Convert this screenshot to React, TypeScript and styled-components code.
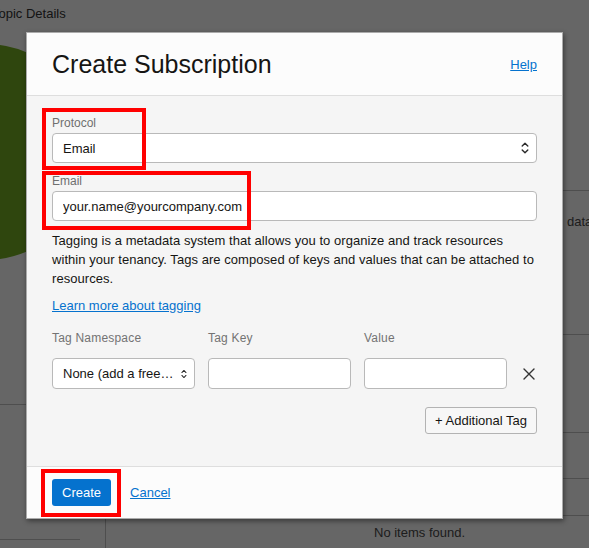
import React from "react";
import styled, { createGlobalStyle } from "styled-components";

const Global = createGlobalStyle`
  html, body { margin: 0; padding: 0; }
  body { font-family: "Liberation Sans", Arial, sans-serif; background: #fff; }
  * { box-sizing: border-box; }
`;

const Screen = styled.div`
  position: relative;
  width: 589px;
  height: 548px;
  overflow: hidden;
  background: #fff;
`;

/* ---------- page behind the dialog ---------- */
const Backdrop = styled.div`
  display: grid;
  grid-template-columns: 105px 1fr;
  height: 100%;
`;

const Side = styled.div`
  display: flex;
  flex-direction: column;
`;

const PageTitle = styled.div`
  margin: 6px 0 0 -8px;
  font-size: 13px;
  line-height: 15px;
  color: #333;
  white-space: nowrap;
`;

const Avatar = styled.div`
  flex-shrink: 0;
  width: 216px;
  height: 216px;
  margin: 23px 0 0 -123px;
  border-radius: 50%;
  background: #76b023;
`;

const Rule = styled.div<{ $top: number; $w: string }>`
  flex-shrink: 0;
  margin-top: ${(p) => p.$top}px;
  width: ${(p) => p.$w};
  height: 1px;
  background: #c4c4c4;
`;

const Main = styled.div`
  padding-top: 190px;
  display: flex;
  flex-direction: column;
`;

const Table = styled.div`
  flex: 1;
  border-left: 1px solid #c4c4c4;
  display: flex;
  flex-direction: column;
`;

const TRow = styled.div<{ $h?: number; $pl: number; $pt: number }>`
  flex: ${(p) => (p.$h ? "0 0 auto" : "1")};
  height: ${(p) => (p.$h ? `${p.$h}px` : "auto")};
  border-top: 1px solid #c4c4c4;
  padding: ${(p) => p.$pt}px 0 0 ${(p) => p.$pl}px;
  font-size: 13px;
  line-height: 16px;
  color: #4a4a4a;
  white-space: nowrap;
`;

const Overlay = styled.div`
  position: absolute;
  inset: 0;
  background: rgba(0, 0, 0, 0.6);
`;

/* ---------- dialog ---------- */
const Dialog = styled.div`
  position: absolute;
  left: 26px;
  top: 32px;
  width: 537px;
  border: 1px solid rgba(0, 0, 0, 0.3);
  box-shadow: 1px 2px 5px rgba(0, 0, 0, 0.45);
  background: #f5f5f5;
  display: flex;
  flex-direction: column;
`;

const Header = styled.div`
  height: 63px;
  padding: 0 25px;
  display: flex;
  align-items: center;
  justify-content: space-between;
  background: #fcfcfc;
  border-bottom: 1px solid #dedede;
`;

const Title = styled.h1`
  margin: 0;
  font-size: 25px;
  line-height: 30px;
  font-weight: 400;
  color: #161513;
`;

const Link = styled.a`
  font-size: 13px;
  line-height: 19px;
  color: #0572ce;
  text-decoration: underline;
  cursor: pointer;
`;

const Body = styled.div`
  padding: 19px 25px 32px;
  display: flex;
  flex-direction: column;
`;

const Field = styled.div<{ $gap?: number }>`
  display: flex;
  flex-direction: column;
  margin-top: ${(p) => p.$gap ?? 0}px;
`;

const Label = styled.label`
  font-size: 12px;
  line-height: 16px;
  color: #6f6f6f;
  margin-bottom: 2px;
`;

const SelectBox = styled.div<{ $h: number }>`
  height: ${(p) => p.$h}px;
  padding: 0 7px 0 10px;
  display: flex;
  align-items: center;
  justify-content: space-between;
  gap: 5px;
  background: #fff;
  border: 1px solid #b9b9b9;
  border-radius: 4px;
  font-size: 13px;
  color: #161513;
  min-width: 0;
`;

const SelectText = styled.span`
  overflow: hidden;
  white-space: nowrap;
  text-overflow: ellipsis;
  min-width: 0;
`;

const TextInput = styled.input<{ $h: number }>`
  height: ${(p) => p.$h}px;
  width: 100%;
  padding: 0 10px;
  background: #fff;
  border: 1px solid #b9b9b9;
  border-radius: 4px;
  font-family: inherit;
  font-size: 13px;
  color: #161513;
  outline: none;
`;

const Help = styled.p`
  margin: 10px 0 0;
  font-size: 13px;
  line-height: 19px;
  letter-spacing: 0.05px;
  color: #161513;
`;

const LearnLink = styled(Link)`
  display: block;
  align-self: flex-start;
  margin-top: 8px;
`;

const TagGrid = styled.div`
  margin-top: 15px;
  display: grid;
  grid-template-columns: 143px 143px 143px 1fr;
  column-gap: 13px;
  row-gap: 12px;
  align-items: center;
`;

const TagLabel = styled.span`
  font-size: 12px;
  line-height: 16px;
  letter-spacing: 0.2px;
  color: #737373;
`;

const RemoveButton = styled.button`
  justify-self: center;
  width: 14px;
  height: 14px;
  padding: 0;
  border: none;
  background: transparent;
  display: flex;
  align-items: center;
  justify-content: center;
  cursor: pointer;
`;

const SecondaryButton = styled.button`
  align-self: flex-end;
  margin-top: 18px;
  height: 27px;
  padding: 0 9px;
  border: 1px solid #b3b3b3;
  border-radius: 3px;
  background: #f7f7f7;
  font-family: inherit;
  font-size: 13px;
  color: #161513;
`;

const Footer = styled.div`
  padding: 12px 25px 12px;
  display: flex;
  align-items: center;
  gap: 19px;
  background: #fcfcfc;
  border-top: 1px solid #dedede;
`;

const PrimaryButton = styled.button`
  height: 27px;
  padding: 0 10px;
  border: none;
  border-radius: 3px;
  background: #0572ce;
  color: #fff;
  font-family: inherit;
  font-size: 13px;
`;

/* ---------- red annotation boxes ---------- */
const Mark = styled.div<{ $x: number; $y: number; $w: number; $h: number }>`
  position: absolute;
  left: ${(p) => p.$x}px;
  top: ${(p) => p.$y}px;
  width: ${(p) => p.$w}px;
  height: ${(p) => p.$h}px;
  border: 4px solid #ff0000;
  pointer-events: none;
`;

const UpDown = () => (
  <svg width="8" height="14" viewBox="0 0 8 14" fill="none" stroke="#2b2b2b" strokeWidth="1.4" strokeLinecap="round" strokeLinejoin="round">
    <path d="M1.2 5 L4 2.2 L6.8 5" />
    <path d="M1.2 9 L4 11.8 L6.8 9" />
  </svg>
);

const CloseIcon = () => (
  <svg width="12" height="12" viewBox="0 0 12 12" fill="none" stroke="#333" strokeWidth="1.4" strokeLinecap="round">
    <path d="M1 1 L11 11 M11 1 L1 11" />
  </svg>
);

export default function App() {
  return (
    <Screen>
      <Global />
      <Backdrop>
        <Side>
          <PageTitle>Topic Details</PageTitle>
          <Avatar />
          <Rule $top={144} $w="105px" />
          <Rule $top={134} $w="80px" />
        </Side>
        <Main>
          <Table>
            <TRow $h={144} $pl={461} $pt={23}>data</TRow>
            <TRow $h={98} $pl={0} $pt={0} />
            <TRow $h={46} $pl={0} $pt={0} />
            <TRow $h={37} $pl={0} $pt={0} />
            <TRow $pl={268} $pt={9}>No items found.</TRow>
          </Table>
        </Main>
      </Backdrop>
      <Overlay />
      <Dialog>
        <Header>
          <Title>Create Subscription</Title>
          <Link>Help</Link>
        </Header>
        <Body>
          <Field>
            <Label>Protocol</Label>
            <SelectBox $h={30}>
              <SelectText>Email</SelectText>
              <UpDown />
            </SelectBox>
          </Field>
          <Field $gap={10}>
            <Label>Email</Label>
            <TextInput $h={30} defaultValue="your.name@yourcompany.com" />
          </Field>
          <Help>
            Tagging is a metadata system that allows you to organize and track resources within your
            tenancy. Tags are composed of keys and values that can be attached to resources.
          </Help>
          <LearnLink>Learn more about tagging</LearnLink>
          <TagGrid>
            <TagLabel>Tag Namespace</TagLabel>
            <TagLabel>Tag Key</TagLabel>
            <TagLabel>Value</TagLabel>
            <span />
            <SelectBox $h={31}>
              <SelectText>None (add a free-form tag)</SelectText>
              <UpDown />
            </SelectBox>
            <TextInput $h={31} />
            <TextInput $h={31} />
            <RemoveButton aria-label="Remove tag">
              <CloseIcon />
            </RemoveButton>
          </TagGrid>
          <SecondaryButton>+ Additional Tag</SecondaryButton>
        </Body>
        <Footer>
          <PrimaryButton>Create</PrimaryButton>
          <Link>Cancel</Link>
        </Footer>
      </Dialog>
      <Mark $x={42} $y={108} $w={104} $h={62} />
      <Mark $x={42} $y={171} $w={209} $h={59} />
      <Mark $x={41} $y={469} $w={80} $h={48} />
    </Screen>
  );
}
